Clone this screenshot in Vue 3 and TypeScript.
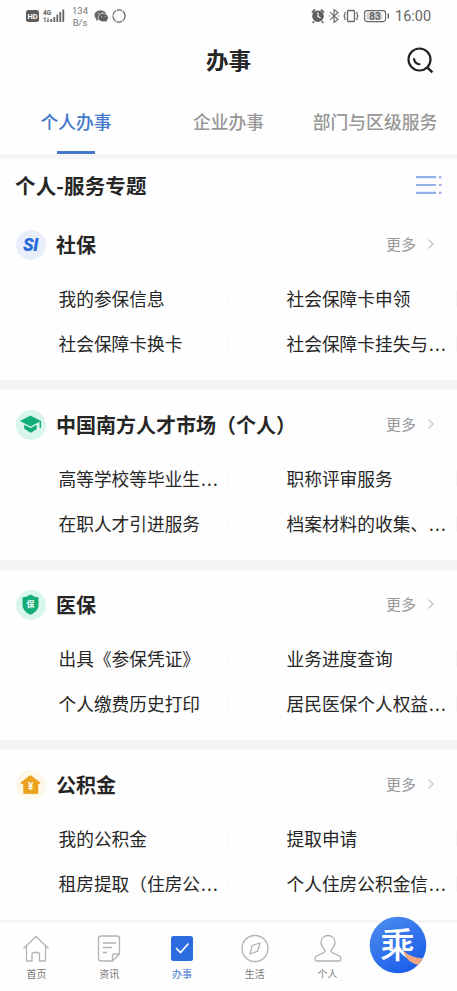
<script setup lang="ts">
type IconKind = 'si' | 'cap' | 'shield' | 'house'

interface ServiceItem {
  name: string
  clipped?: boolean
}

interface ServiceGroup {
  title: string
  icon: IconKind
  items: ServiceItem[]
}

const tabs: string[] = ['个人办事', '企业办事', '部门与区级服务']

const groups: ServiceGroup[] = [
  {
    title: '社保',
    icon: 'si',
    items: [{ name: '我的参保信息' }, { name: '社会保障卡申领' }, { name: '社会保障卡换卡' }, { name: '社会保障卡挂失与', clipped: true }],
  },
  {
    title: '中国南方人才市场（个人）',
    icon: 'cap',
    items: [{ name: '高等学校等毕业生', clipped: true }, { name: '职称评审服务' }, { name: '在职人才引进服务' }, { name: '档案材料的收集、', clipped: true }],
  },
  {
    title: '医保',
    icon: 'shield',
    items: [{ name: '出具《参保凭证》' }, { name: '业务进度查询' }, { name: '个人缴费历史打印' }, { name: '居民医保个人权益', clipped: true }],
  },
  {
    title: '公积金',
    icon: 'house',
    items: [{ name: '我的公积金' }, { name: '提取申请' }, { name: '租房提取（住房公', clipped: true }, { name: '个人住房公积金信', clipped: true }],
  },
]
</script>

<template>
  <div class="screen" lang="zh-CN">
    <div class="status">
      <svg class="status-left" width="110" height="32" viewBox="0 0 110 32">
        <rect x="0" y="10" width="13" height="12" rx="2.5" fill="#5c5c5c" />
        <text x="6.5" y="19.2" class="hd">HD</text>
        <text x="17" y="15" class="tiny">4G</text>
        <path d="M19 17.5v4.5M17.6 19l1.4-1.7M22 17.5V22M20.8 20.5L22 22l1.2-1.5" class="s" stroke-width="1" />
        <path d="M25.3 19v3M28.3 17v5M31.3 14.5V22M34.3 12V22M37.3 9.5V22" class="s" stroke-width="1.8" />
        <text x="54" y="14.2" class="rate">134</text>
        <text x="54" y="25.6" class="rate">B/s</text>
        <path d="M74.5 10.4c-3.5 0-6 2.1-6 4.8 0 1.5.8 2.8 2 3.7l-.5 2 2.2-1.1c.8.2 1.6.3 2.5.3 3.3 0 5.8-2.1 5.8-4.9s-2.6-4.8-6-4.8z" fill="#666" />
        <path d="M77.2 13.5c-3 0-5 1.8-5 4.1s2 4.2 5 4.2c.7 0 1.3-.1 2-.3l1.9 1-.4-1.7c1-.8 1.5-1.9 1.5-3.2 0-2.3-2.1-4.1-5-4.1z" fill="#5d5d5d" stroke="#fff" stroke-width=".6" />
        <circle cx="72.8" cy="13.6" r=".6" fill="#fff" />
        <circle cx="76.5" cy="12.6" r=".5" fill="#fff" />
        <circle cx="75.7" cy="16.8" r=".5" fill="#fff" />
        <circle cx="79" cy="16.8" r=".5" fill="#fff" />
        <circle cx="93" cy="16" r="6.1" class="s" stroke-width="1.3" stroke-dasharray="5.6 .8" />
      </svg>
      <div class="status-right">
        <svg width="80" height="20" viewBox="0 0 80 20">
          <circle cx="8" cy="10.2" r="5.8" fill="#5f5f5f" />
          <path d="M2 6.5l3-3M14 6.5l-3-3M4 15.5l-1.3 1.3M12 15.5l1.3 1.3" class="s" stroke-width="1.8" />
          <path d="M8 6.5v4l2.5 1.5" fill="none" stroke="#fff" stroke-width="1.2" />
          <path d="M20 6.2l8 7.3-4 3V3.5l4 3-8 7.3" class="s" stroke-width="1.1" />
          <path d="M18.8 10h1M28.2 10h1" class="s" stroke-width="1.2" />
          <rect x="37.5" y="4.5" width="7" height="11" rx="1" class="s" stroke-width="1.3" />
          <path d="M35 6v2.2l-1 1.8 1 1.8V14M47 6v2.2l1 1.8-1 1.8V14" class="s" stroke-width="1.2" />
          <rect x="54.6" y="4.6" width="21" height="11" rx="2.5" class="s" stroke-width="1.1" />
          <rect x="56.5" y="6.5" width="15.5" height="7.3" rx="1" fill="#cfcfcf" />
          <text x="65" y="13.8" class="battery">83</text>
          <path d="M78.3 7.5v5" class="s" stroke-width="1.4" />
        </svg>
        <span class="clock">16:00</span>
      </div>
    </div>

    <header class="header">
      <h1>办事</h1>
      <svg class="search" width="30" height="30" viewBox="0 0 30 30">
        <circle cx="14.5" cy="13.5" r="11" fill="none" stroke="#232323" stroke-width="2.2" />
        <path d="M22.2 21.4l5.2 5" stroke="#232323" stroke-width="2.5" />
        <path d="M9 13c.5 3 2.600 5 5.500 5.200" fill="none" stroke="#232323" stroke-width="2.1" stroke-linecap="round" />
      </svg>
    </header>

    <nav class="tabs">
      <div v-for="(tab, i) in tabs" :key="tab" class="tab" :class="{ active: i === 0 }">{{ tab }}</div>
    </nav>

    <div class="topic">
      <h2>个人-服务专题</h2>
      <svg width="26" height="20" viewBox="0 0 26 20">
        <path d="M0 2.2h20M0 10h20M0 17.8h20" stroke="#91b1e8" stroke-width="2.2" />
        <path d="M23 2.2h2.4M23 10h2.4M23 17.8h2.4" stroke="#91b1e8" stroke-width="2.2" />
      </svg>
    </div>

    <section v-for="g in groups" :key="g.title" class="group">
      <div class="group-head">
        <svg class="group-icon" width="32" height="32" viewBox="0 0 32 32">
          <template v-if="g.icon === 'si'">
            <circle cx="16" cy="16" r="15" fill="#e9eefb" />
            <text x="15.5" y="22" class="si">SI</text>
          </template>
          <template v-else-if="g.icon === 'cap'">
            <circle cx="16" cy="16" r="15" fill="#d9f6eb" />
            <path d="M15.5 6.5L5 12l10.5 5.5L26 12z" fill="#13ad78" />
            <path d="M9.2 15.8v3.9l6.5 4 6-3.5v-4.5l-6 3.2z" fill="#13ad78" />
            <path d="M25.3 12v7" stroke="#13ad78" stroke-width="1.5" />
          </template>
          <template v-else-if="g.icon === 'shield'">
            <circle cx="16" cy="16" r="15" fill="#d9f6eb" />
            <path d="M15.5 5.5c2.3 1.7 4.8 2.5 8 3v7.5c0 4.6-3.5 7.7-8 9.7-4.5-2-8-5.1-8-9.700V8.500c3.200-.5 5.700-1.300 8-3z" fill="#13ad78" />
            <text x="15.5" y="18.3" class="bao">保</text>
          </template>
          <template v-else>
            <circle cx="16" cy="16" r="15" fill="#fdf8ea" />
            <path d="M15.5 6.3l9.8 7.5-1 1.2H23v8.700q0 1-1 1H9.500q-1 0-1-1V15H6.700l-1-1.200z" fill="#eba31f" stroke="#eba31f" stroke-width=".5" stroke-linejoin="round" />
            <text x="15.7" y="20.8" class="yen">¥</text>
          </template>
        </svg>
        <h3>{{ g.title }}</h3>
        <span class="more">更多</span>
        <svg class="chevron" width="8" height="12" viewBox="0 0 8 12">
          <path d="M1.5 1.5L6 6l-4.5 4.5" fill="none" stroke="#c4c4c4" stroke-width="1.3" />
        </svg>
      </div>
      <div class="items">
        <div v-for="item in g.items" :key="item.name" class="item">
          <span class="name">{{ item.name }}<span v-if="item.clipped" class="dots">...</span></span>
        </div>
      </div>
    </section>

    <footer class="bar">
      <div class="bar-item">
        <svg width="30" height="30" viewBox="0 0 30 30" class="line">
          <path d="M2.5 15.5L15 3.5l12.500 12M5.500 13v14q0 1 1 1H11v-6.500q0-2 2-2h3.500q2 0 2 2V28h5q1 0 1-1V13" />
        </svg>
        <span>首页</span>
      </div>
      <div class="bar-item">
        <svg width="30" height="30" viewBox="0 0 30 30" class="line">
          <path d="M18.5 28H7q-2.500 0-2.500-2.500v-20Q4.500 3 7 3h16q2.500 0 2.500 2.500V21zM18.500 28v-5q0-2 2-2h5M9 10h13M9 14.500h9M9 19.500h4" />
        </svg>
        <span>资讯</span>
      </div>
      <div class="bar-item on">
        <svg width="30" height="30" viewBox="0 0 30 30">
          <rect x="4" y="3" width="22" height="25" rx="2.5" fill="#2c6be0" />
          <path d="M9 15l4.5 4.5 8-9" fill="none" stroke="#fff" stroke-width="1.7" />
        </svg>
        <span>办事</span>
      </div>
      <div class="bar-item">
        <svg width="30" height="30" viewBox="0 0 30 30" class="line">
          <circle cx="15" cy="15.5" r="13" />
          <path d="M20 10l-2.3 8.2L10 21l2.2-8.5z" />
        </svg>
        <span>生活</span>
      </div>
      <div class="bar-item">
        <svg width="30" height="30" viewBox="0 0 30 30" class="line">
          <path d="M15 2.5c-4 0-7 2.800-7 6.500 0 3.500 1.500 5.500 3.500 7.500 1.200 1.500.3 2.800-1.500 3.700l-5.500 2.300c-2 .9-2.500 2.200-2.500 4 0 1 .5 1.500 1.500 1.500h23c1 0 1.500-.5 1.500-1.500 0-1.800-.5-3.100-2.500-4L20 20.200c-1.800-.9-2.700-2.200-1.500-3.700C20.500 14.500 22 12.500 22 9c0-3.700-3-6.500-7-6.500z" />
        </svg>
        <span>个人</span>
      </div>
      <svg class="float" width="58" height="58" viewBox="0 0 58 58">
        <defs>
          <linearGradient id="disc" x1="0" y1="0" x2="0.6" y2="1">
            <stop offset="0" stop-color="#4e8fee" />
            <stop offset="1" stop-color="#1d5fea" />
          </linearGradient>
          <clipPath id="round"><circle cx="29" cy="29" r="28.3" /></clipPath>
        </defs>
        <circle cx="29" cy="29" r="28.3" fill="url(#disc)" />
        <text x="28.5" y="42" class="mark">乘</text>
        <path d="M34.5 35c4.500 4.500 10 6.500 20 7.500l-3.500 7c-8-1.500-14.500-6-16.500-14.500z" fill="#f0a47f" clip-path="url(#round)" />
      </svg>
    </footer>
  </div>
</template>

<style>
body {
  margin: 0;
  background: #fff;
}
</style>

<style scoped>
.screen {
  width: 457px;
  height: 991px;
  overflow: hidden;
  background: #fefefe;
  color: #262626;
  font-family: "Noto Sans CJK SC", "Noto Sans", sans-serif;
}
h1, h2, h3 {
  margin: 0;
  font-weight: 700;
}
.status {
  height: 35px;
  display: flex;
  justify-content: space-between;
  box-sizing: border-box;
  padding: 0 26px;
}
.s {
  fill: none;
  stroke: #666;
}
.hd {
  font: 700 7.5px Roboto, sans-serif;
  fill: #fff;
  text-anchor: middle;
}
.tiny {
  font: 700 6.5px Roboto, sans-serif;
  fill: #5c5c5c;
}
.rate {
  font: 400 9.5px Roboto, sans-serif;
  fill: #777;
  text-anchor: middle;
}
.battery {
  font: 500 10px Roboto, sans-serif;
  fill: #555;
  text-anchor: middle;
}
.status-right {
  display: flex;
  align-items: center;
  height: 32px;
}
.clock {
  width: 36px;
  margin: 2px 0 0 5px;
  font: 400 14.5px/20px Roboto, sans-serif;
  color: #666;
}
.header {
  height: 51px;
  display: grid;
  grid-template-columns: 1fr auto 1fr;
  align-items: center;
}
.header h1 {
  grid-column: 2;
  font-size: 22.5px;
  line-height: 48px;
  padding-bottom: 3px;
}
.search {
  justify-self: end;
  margin-right: 22px;
  margin-top: 1px;
}
.tabs {
  height: 68px;
  display: grid;
  grid-template-columns: 152px 153px 140px;
  border-bottom: 5px solid #f5f5f5;
}
.tab {
  display: flex;
  flex-direction: column;
  align-items: center;
  font-size: 17.8px;
  line-height: 70px;
  height: 68px;
  font-weight: 500;
  color: #989898;
  white-space: nowrap;
}
.tab.active {
  color: #4478cc;
}
.tab.active::after {
  content: "";
  width: 38px;
  height: 3px;
  margin-top: -5px;
  background: #4478cc;
}
.topic {
  height: 51px;
  box-sizing: border-box;
  padding: 0 15px;
  display: flex;
  justify-content: space-between;
  align-items: center;
}
.topic h2 {
  font-size: 20.5px;
  line-height: 51px;
  letter-spacing: .15px;
  padding-top: 2px;
}
.group {
  height: 180px;
  box-sizing: border-box;
  border-bottom: 10px solid #f5f5f5;
}
.group:last-of-type {
  height: 170px;
  border-bottom: 0;
}
.group-head {
  height: 70px;
  display: flex;
  align-items: center;
  padding: 0 22px 0 15px;
}
.group-head h3 {
  margin-left: 9px;
  font-size: 20px;
  line-height: 30px;
}
.more {
  margin-left: auto;
  margin-top: -3px;
  font-size: 15px;
  line-height: 22px;
  color: #999;
}
.chevron {
  margin-left: 11px;
  margin-top: -3px;
}
.si {
  font: italic 900 17.5px Roboto, sans-serif;
  letter-spacing: -.3px;
  fill: #2869d9;
  text-anchor: middle;
}
.bao {
  font-size: 8px;
  font-weight: 700;
  fill: #fff;
  text-anchor: middle;
}
.yen {
  font: 700 10px Roboto, sans-serif;
  fill: #fff;
  text-anchor: middle;
}
.items {
  display: grid;
  grid-template-columns: 228px 229px;
  grid-auto-rows: 44.5px;
  margin-top: -3px;
}
.item {
  display: flex;
  align-items: center;
  padding-left: 58.5px;
  background: linear-gradient(#f7f7f7, #f7f7f7) right center / 1px 16px no-repeat;
}
.name {
  white-space: nowrap;
  font-family: "Noto Sans", "Noto Sans CJK SC", sans-serif;
  font-size: 17.7px;
  line-height: 28px;
}
.dots {
  margin-left: 1px;
  letter-spacing: 1.2px;
}
.bar {
  position: relative;
  height: 71px;
  box-sizing: border-box;
  border-top: 3px solid #f5f5f5;
  display: grid;
  grid-template-columns: repeat(5, 72.8px);
}
.bar-item {
  display: flex;
  flex-direction: column;
  align-items: center;
  padding-top: 10px;
  font-size: 10px;
  line-height: 15px;
  color: #777;
}
.bar-item span {
  margin-top: 3px;
}
.bar-item.on {
  color: #3f76cc;
}
.line {
  fill: none;
  stroke: #b3b3b3;
  stroke-width: 1.3;
  stroke-linejoin: round;
}
.float {
  position: absolute;
  left: 368.5px;
  top: -7px;
}
.mark {
  font-size: 35px;
  font-weight: 500;
  fill: #fff;
  text-anchor: middle;
}
</style>
